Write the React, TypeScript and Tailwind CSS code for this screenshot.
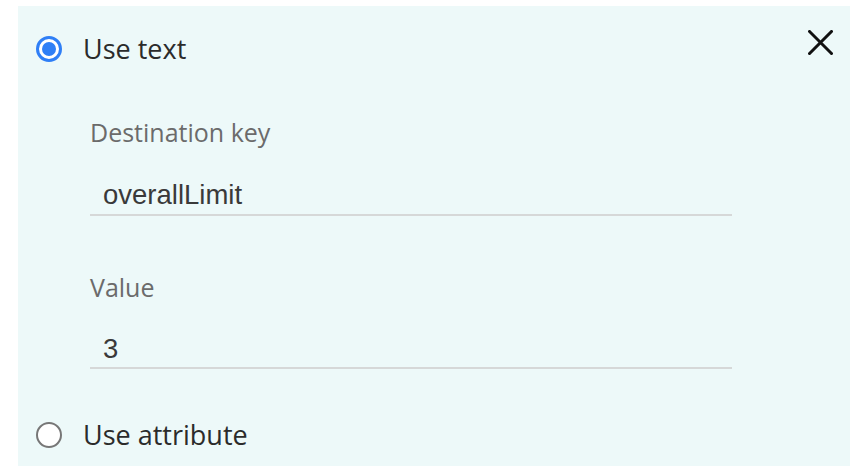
export default function App() {
  return (
    <div className="w-[860px] h-[474px] bg-white pt-[6px] pl-[18px] font-['Open_Sans',sans-serif]">
      <div className="relative w-[832px] h-[460px] bg-[#edf9f9] pl-[18px]">
        {/* Close button */}
        <button className="absolute left-[790px] top-[24px] w-[25px] h-[25px] flex items-center justify-center">
          <svg width="25" height="25" viewBox="0 0 25 25">
            <path d="M1.5 1.5 L23.5 23.5 M23.5 1.5 L1.5 23.5" stroke="#111" strokeWidth="3" strokeLinecap="square" />
          </svg>
        </button>

        {/* Use text */}
        <label className="flex items-center gap-[21px] pt-[23px] h-[62px]">
          <span className="w-[26px] h-[26px] rounded-full border-[3px] border-[#2f7ff6] flex items-center justify-center bg-white">
            <span className="w-[14px] h-[14px] rounded-full bg-[#2f7ff6]" />
          </span>
          <span className="text-[27px] leading-none text-[#2b2b2b]">Use text</span>
        </label>

        {/* Fields */}
        <div className="ml-[54px] w-[642px] flex flex-col">
          <div className="mt-[52px] text-[25px] leading-none text-[#6b6b6b]">Destination key</div>
          <div className="mt-[36px] pl-[13px] pb-[5px] border-b-2 border-[#d6d8d8] font-['Liberation_Sans',sans-serif] text-[27.5px] leading-none text-[#3a3a3a]">
            overallLimit
          </div>
          <div className="mt-[59px] text-[25px] leading-none text-[#6b6b6b]">Value</div>
          <div className="mt-[35px] pl-[13px] pb-[5px] border-b-2 border-[#d6d8d8] font-['Liberation_Sans',sans-serif] text-[27.5px] leading-none text-[#3a3a3a]">
            3
          </div>
        </div>

        {/* Use attribute */}
        <label className="flex items-center gap-[21px] mt-[52px]">
          <span className="w-[26px] h-[26px] rounded-full border-2 border-[#777] bg-white" />
          <span className="text-[27px] leading-none text-[#2b2b2b]">Use attribute</span>
        </label>
      </div>
    </div>
  );
}
